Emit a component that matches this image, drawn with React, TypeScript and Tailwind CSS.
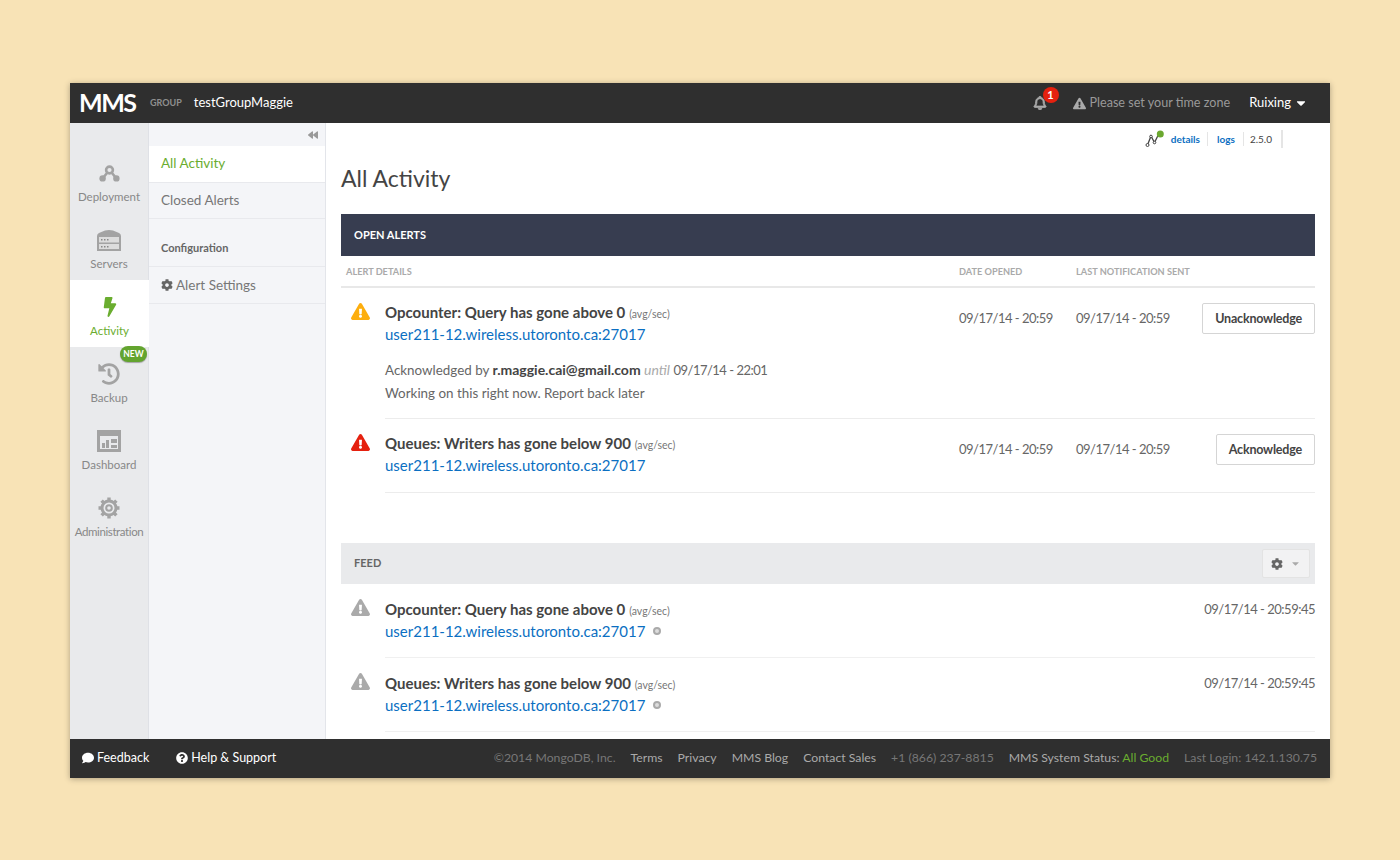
import React from 'react';
import {
  FaBackward,
  FaBolt,
  FaCaretDown,
  FaCog,
  FaComment,
  FaExclamationTriangle,
  FaHistory,
  FaQuestionCircle,
  FaRegBell,
} from 'react-icons/fa';

const DeploymentIcon = () => (
  <svg width="21" height="17" viewBox="0 0 21 17" fill="#a3a3a3">
    <circle cx="10.5" cy="5" r="3.4" fill="none" stroke="#a3a3a3" strokeWidth="2.6" />
    <path d="M8 8 L4 13 M13 8 L17 13" stroke="#a3a3a3" strokeWidth="2.6" />
    <circle cx="3.6" cy="13.4" r="3.2" />
    <circle cx="17.4" cy="13.4" r="3.2" />
  </svg>
);

const ServersIcon = () => (
  <svg width="24" height="21" viewBox="0 0 24 21" fill="#a3a3a3">
    <path d="M0 6 Q0 4 2 3 L8 0.5 Q12 -0.5 16 0.5 L22 3 Q24 4 24 6 V21 H0 Z" />
    <path d="M2 7H22V12.5H2zM2 14H22V19H2z" fill="#dcdcdc" />
    <path d="M4 9h1.5v1.5H4zM7 9h1.5v1.5H7zM10 9h1.5v1.5H10zM4 16h1.5v1.5H4zM7 16h1.5v1.5H7zM10 16h1.5v1.5H10z" fill="#888" />
  </svg>
);

const DashboardIcon = () => (
  <svg width="24" height="22" viewBox="0 0 24 22" fill="#a3a3a3">
    <path d="M0 0 H24 V22 H0 Z M3 6 V19 H21 V6 Z" fillRule="evenodd" />
    <path d="M5 13h3v5H5zM9 10h3v8H9zM14 9h6v4h-6zM14 15h6v3h-6z" />
  </svg>
);

const AdminIcon = () => (
  <svg width="22" height="22" viewBox="0 0 22 22">
    <circle cx="11" cy="11" r="7" fill="none" stroke="#a3a3a3" strokeWidth="3" />
    <circle cx="11" cy="11" r="2.8" fill="none" stroke="#a3a3a3" strokeWidth="2" />
    <path
      d="M11 0.5V4M11 18V21.5M0.5 11H4M18 11H21.5M3.6 3.6L6 6M16 16L18.4 18.4M18.4 3.6L16 6M6 16L3.6 18.4"
      stroke="#a3a3a3"
      strokeWidth="3.4"
    />
  </svg>
);

const StatusIcon = () => (
  <svg width="19" height="18" viewBox="0 0 19 18" fill="none">
    <path d="M2.5 15 L6 6 L9.5 12.5 L13 5.5" stroke="#444" strokeWidth="1.3" />
    <circle cx="2.5" cy="15" r="1.5" stroke="#444" strokeWidth="1" fill="#fff" />
    <circle cx="6" cy="6.5" r="1.3" stroke="#444" strokeWidth="1" fill="#fff" />
    <circle cx="9.5" cy="12.5" r="1.3" stroke="#444" strokeWidth="1" fill="#fff" />
    <circle cx="15.3" cy="4" r="3.5" fill="#6ba82f" />
  </svg>
);

const navItems = [
  { label: 'Deployment', icon: <DeploymentIcon /> },
  { label: 'Servers', icon: <ServersIcon /> },
  { label: 'Activity', icon: <FaBolt className="text-[20px] text-[#6aad2f]" />, active: true },
  { label: 'Backup', icon: <FaHistory className="text-[22px] text-[#a3a3a3]" />, badge: true },
  { label: 'Dashboard', icon: <DashboardIcon /> },
  { label: 'Administration', icon: <AdminIcon />, tight: true },
];

const Title = ({ text }: { text: string }) => (
  <div className="text-[15px] leading-[22px] text-[#444]">
    <span className="font-bold">{text}</span>{' '}
    <span className="text-[10.5px] leading-none text-[#777]">(avg/sec)</span>
  </div>
);

const HostLink = () => (
  <a className="block text-[15px] leading-[22px] text-[#0b6fc2]">user211-12.wireless.utoronto.ca:27017</a>
);

const AlertRow = ({
  iconColor,
  title,
  button,
  children,
  className,
}: {
  iconColor: string;
  title: string;
  button: string;
  children?: React.ReactNode;
  className: string;
}) => (
  <div className="flex">
    <div className="w-[44px] shrink-0 pl-[10px] pt-[14px]">
      <FaExclamationTriangle className={`text-[19px] ${iconColor}`} />
    </div>
    <div className={`flex flex-1 border-b border-[#ececec] ${className}`}>
      <div className="w-[574px]">
        <div className="pt-[13px]">
          <Title text={title} />
          <HostLink />
        </div>
        {children}
      </div>
      <div className="w-[117px] pt-[21px] text-[13px] leading-[18px] tracking-[-0.5px] text-[#666]">09/17/14 - 20:59</div>
      <div className="flex-1 pt-[21px] text-[13px] leading-[18px] tracking-[-0.5px] text-[#666]">09/17/14 - 20:59</div>
      <div className="pt-[15px]">
        <button className="h-[31px] rounded-[2px] border border-[#d5d5d5] bg-white px-3 pt-[2px] text-[12.5px] font-bold tracking-[-0.2px] text-[#444]">
          {button}
        </button>
      </div>
    </div>
  </div>
);

const FeedRow = ({ title }: { title: string }) => (
  <div className="flex">
    <div className="w-[44px] shrink-0 pl-[10px] pt-[14px]">
      <FaExclamationTriangle className="text-[19px] text-[#aaa]" />
    </div>
    <div className="flex h-[74px] flex-1 justify-between border-b border-[#f0f0f0] pt-[14px]">
      <div>
        <Title text={title} />
        <div className="flex items-center gap-2">
          <HostLink />
          <span className="h-[8px] w-[8px] rounded-full border-[2.5px] border-[#aaa] bg-[#ddd]" />
        </div>
      </div>
      <div className="pt-[2px] text-[13px] leading-[18px] tracking-[-0.5px] text-[#666]">09/17/14 - 20:59:45</div>
    </div>
  </div>
);

export default function App() {
  return (
    <div className="min-h-[860px] bg-[#f8e3b6] px-[70px] pt-[83px] font-['Lato',sans-serif]">
      <div className="flex h-[695px] flex-col shadow-[0_1px_6px_rgba(0,0,0,0.3)]">
        {/* Top bar */}
        <header className="flex h-[40px] shrink-0 items-center bg-[#2f2f2f] pl-[9px] pr-[22px]">
          <span className="w-[71px] text-[25px] font-bold tracking-[-1.5px] text-white">MMS</span>
          <span className="text-[9px] font-bold text-[#8f8f8f]">GROUP</span>
          <span className="ml-[12px] text-[13px] text-white">testGroupMaggie</span>
          <div className="relative ml-auto mr-[26px]">
            <FaRegBell className="text-[14px] text-[#aaa]" stroke="currentColor" strokeWidth={30} />
            <span className="absolute -right-[12px] -top-[9px] flex h-[16px] w-[16px] items-center justify-center rounded-full bg-[#e5210f] text-[11px] font-bold text-white">
              1
            </span>
          </div>
          <FaExclamationTriangle className="text-[13px] text-[#aaa]" />
          <span className="ml-[4px] text-[12.6px] text-[#999]">Please set your time zone</span>
          <span className="ml-[19px] text-[13px] text-white">Ruixing</span>
          <FaCaretDown className="ml-[3px] text-[14px] text-white" />
        </header>

        <div className="flex min-h-0 flex-1 bg-white">
          {/* Main nav */}
          <nav className="flex w-[79px] shrink-0 flex-col border-r border-[#dfe1e6] bg-[#e9eaec] pt-[23px]">
            {navItems.map((item) => (
              <div
                key={item.label}
                className={`relative flex h-[67px] flex-col items-center justify-start pt-[15px] ${item.active ? '-mr-px bg-white' : ''}`}
              >
                <div className="flex h-[24px] items-center">{item.icon}</div>
                <span
                  className={`mt-[4px] text-[11.5px] leading-[16px] ${item.active ? 'text-[#6aad2f]' : 'text-[#888]'} ${item.tight ? 'tracking-[-0.4px]' : ''}`}
                >
                  {item.label}
                </span>
                {item.badge && (
                  <span className="absolute -top-[1px] right-[1px] flex h-[16px] w-[27px] items-center justify-center rounded-full bg-[#63a42f] text-[8.5px] font-bold text-white shadow-[0_1px_1px_rgba(0,0,0,0.3)]">
                    NEW
                  </span>
                )}
              </div>
            ))}
          </nav>

          {/* Sub nav */}
          <aside className="w-[177px] shrink-0 border-r border-[#e3e5ea] bg-[#f4f5f8]">
            <div className="flex h-[23px] items-center justify-end pr-[7px]">
              <FaBackward className="text-[10px] text-[#999]" />
            </div>
            <div className="flex h-[37px] items-center border-b border-[#e8e9ed] bg-white pb-[1px] pl-[12px] text-[13.5px] text-[#6aad2f]">
              All Activity
            </div>
            <div className="flex h-[36px] items-center border-b border-[#e8e9ed] pb-[1px] pl-[12px] text-[13.5px] text-[#777]">
              Closed Alerts
            </div>
            <div className="flex h-[48px] items-end border-b border-[#e8e9ed] pb-[10px] pl-[12px] text-[11px] font-bold text-[#666]">
              Configuration
            </div>
            <div className="flex h-[37px] items-center gap-[3px] border-b border-[#e8e9ed] pl-[12px] text-[13.5px] text-[#777]">
              <FaCog className="text-[12px] text-[#666]" />
              Alert Settings
            </div>
          </aside>

          {/* Content */}
          <main className="min-w-0 flex-1 px-[15px]">
            <div className="flex h-[34px] items-center justify-end pb-[3px] pr-[32px] text-[10px]">
              <StatusIcon />
              <span className="ml-[7px] border-r border-[#e5e5e5] pr-[7px] font-bold leading-[14px] text-[#0b6fc2]">details</span>
              <span className="border-r border-[#e5e5e5] pl-[9px] pr-[8px] font-bold leading-[14px] text-[#0b6fc2]">logs</span>
              <span className="border-r-2 border-[#e5e5e5] pl-[6px] pr-[9px] leading-[18px] text-[#444]">2.5.0</span>
            </div>
            <h1 className="text-[23px] leading-[42px] text-[#444]">All Activity</h1>
            <div className="mt-[15px] flex h-[42px] items-center bg-[#373d50] pl-[13px] pt-[1px] text-[11px] font-bold text-white">
              OPEN ALERTS
            </div>
            <div className="flex h-[32px] items-center border-b-2 border-[#e8e8e8] pl-[5px] pt-[1px] text-[9.2px] font-bold text-[#aaa]">
              <span className="w-[613px]">ALERT DETAILS</span>
              <span className="w-[117px]">DATE OPENED</span>
              <span>LAST NOTIFICATION SENT</span>
            </div>
            <AlertRow iconColor="text-[#fdae0e]" title="Opcounter: Query has gone above 0" button="Unacknowledge" className="h-[131px]">
              <div className="mt-[13px] text-[13.4px] leading-[23px] text-[#666]">
                Acknowledged by <span className="text-[14px] font-bold text-[#444]">r.maggie.cai@gmail.com</span>{' '}
                <span className="text-[14px] italic text-[#aaa]">until</span>{' '}
                <span className="text-[13px] tracking-[-0.5px]">09/17/14 - 22:01</span>
                <br />
                Working on this right now. Report back later
              </div>
            </AlertRow>
            <AlertRow iconColor="text-[#e5210f]" title="Queues: Writers has gone below 900" button="Acknowledge" className="h-[74px]" />
            <div className="mt-[50px] flex h-[41px] items-center justify-between bg-[#e9eaec] pl-[13px] pr-[5px] text-[11px] font-bold text-[#666]">
              FEED
              <div className="flex h-[29px] w-[48px] items-center justify-center gap-[7px] rounded-[2px] border border-[#e3e3e3] bg-[#f2f2f3]">
                <FaCog className="text-[12px] text-[#666]" />
                <FaCaretDown className="text-[11px] text-[#aaa]" />
              </div>
            </div>
            <FeedRow title="Opcounter: Query has gone above 0" />
            <FeedRow title="Queues: Writers has gone below 900" />
          </main>
        </div>

        {/* Footer */}
        <footer className="flex h-[39px] shrink-0 items-center justify-between bg-[#2f2f2f] pb-[1px] pl-[12px] pr-[13px] text-[12.25px]">
          <div className="flex items-center text-[12.5px] text-white">
            <FaComment className="mr-[3px] text-[12px]" />
            <span>Feedback</span>
            <FaQuestionCircle className="ml-[27px] mr-[3px] text-[12px]" />
            <span>Help &amp; Support</span>
          </div>
          <div className="flex items-center gap-[15px] text-[#777]">
            <span>©2014 MongoDB, Inc.</span>
            <span className="text-[#aaa]">Terms</span>
            <span className="text-[#aaa]">Privacy</span>
            <span className="text-[#aaa]">MMS Blog</span>
            <span className="text-[#aaa]">Contact Sales</span>
            <span>+1 (866) 237-8815</span>
            <span className="text-[#aaa]">
              MMS System Status: <span className="text-[#6aad2f]">All Good</span>
            </span>
            <span>Last Login: 142.1.130.75</span>
          </div>
        </footer>
      </div>
    </div>
  );
}
